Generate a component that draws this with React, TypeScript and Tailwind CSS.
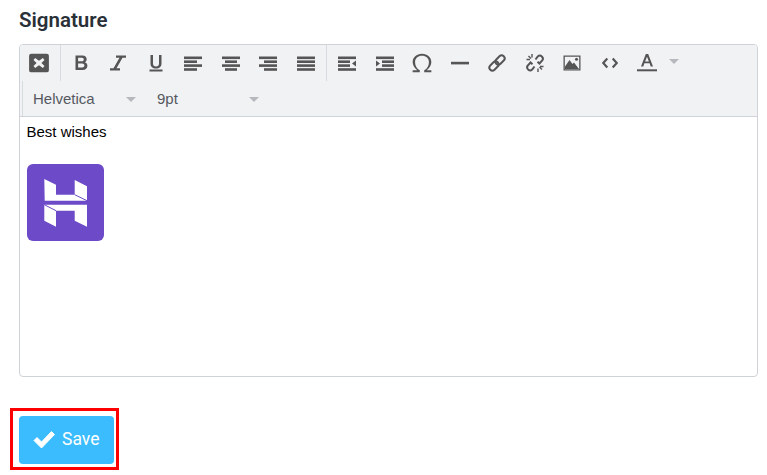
import React from "react";

const Ic = ({ children, w = 20, h = 20 }: { children: React.ReactNode; w?: number; h?: number }) => (
  <svg width={w} height={h} viewBox="0 0 20 20" fill="#555555">{children}</svg>
);

const Lines = ({ rows }: { rows: [number, number][] }) => (
  <Ic>
    {rows.map(([x, w], i) => (
      <rect key={i} x={x} y={3.5 + i * 3.9} width={w} height={2.6} />
    ))}
  </Ic>
);

const Btn = ({ children }: { children: React.ReactNode }) => (
  <div className="w-[37.5px] h-[36px] flex items-center justify-center">{children}</div>
);

const Sep = () => <div className="w-px h-full bg-[#d7dbe0] mx-[1.5px]" />;

const Caret = () => (
  <span className="w-0 h-0 border-x-[5px] border-x-transparent border-t-[5px] border-t-[#b5b9be]" />
);

export default function App() {
  return (
    <div className="w-[767px] h-[475px] bg-white overflow-hidden font-['Roboto',sans-serif]">
      <h2 className="pl-[19px] pt-[8px] h-[44px] text-[20.5px] leading-[24px] font-semibold text-[#2a3038]">Signature</h2>
      <div className="ml-[19px] w-[739px] h-[333px] border border-[#cfd3d8] rounded-[4px] overflow-hidden">
        <div className="h-[72px] bg-[#f1f2f4] border-b border-[#cfd3d8]">
          <div className="h-[36px] flex pl-[0.5px]">
            <Btn>
              <Ic w={22} h={22}>
                <path fillRule="evenodd" d="M3 1.500h14a2 2 0 0 1 2 2v13a2 2 0 0 1-2 2H3a2 2 0 0 1-2-2v-13a2 2 0 0 1 2-2Zm3.500 4L5 7.200 7.800 10 5 12.800l1.500 1.700L10 12l3.500 2.500 1.500-1.700L12.200 10 15 7.200l-1.500-1.700L10 8z" />
              </Ic>
            </Btn>
            <Sep />
            <Btn>
              <Ic>
                <path fillRule="evenodd" d="M4.500 2.500h6.900c2.700 0 4.300 1.500 4.300 3.700 0 1.400-.7 2.500-1.800 3 1.500.5 2.500 1.800 2.500 3.500 0 2.500-1.800 4.300-4.700 4.300H4.500Zm2.600 2.300v3.500h3.700c1.200 0 2-.7 2-1.800 0-1-.8-1.700-2-1.700Zm0 5.800v4h4c1.400 0 2.300-.8 2.300-2s-.9-2-2.300-2Z" />
              </Ic>
            </Btn>
            <Btn>
              <Ic>
                <path d="M8 2.500h10v2.200h-3.500L8.500 15.300H12v2.200H2v-2.200h3.500L11.500 4.700H8Z" />
              </Ic>
            </Btn>
            <Btn>
              <Ic>
                <path d="M4.500 2h2.500v8.500c0 2 1.100 3 3 3s3-1 3-3V2h2.500v8.500c0 3.300-2.100 5-5.500 5s-5.500-1.700-5.500-5Z" />
                <rect x="3.500" y="16.500" width="13" height="2" />
              </Ic>
            </Btn>
            <Btn><Lines rows={[[1, 18], [1, 13], [1, 18], [1, 13]]} /></Btn>
            <Btn><Lines rows={[[1, 18], [4, 12], [1, 18], [4, 12]]} /></Btn>
            <Btn><Lines rows={[[1, 18], [6, 13], [1, 18], [6, 13]]} /></Btn>
            <Btn><Lines rows={[[1, 18], [1, 18], [1, 18], [1, 18]]} /></Btn>
            <Sep />
            <Btn>
              <Ic>
                <rect x="1" y="3.500" width="18" height="2.600" />
                <rect x="1" y="7.400" width="12" height="2.600" />
                <rect x="1" y="11.300" width="12" height="2.600" />
                <rect x="1" y="15.200" width="18" height="2.600" />
                <path d="M19 7.500v6l-4-3Z" />
              </Ic>
            </Btn>
            <Btn>
              <Ic>
                <rect x="1" y="3.500" width="18" height="2.600" />
                <rect x="7" y="7.400" width="12" height="2.600" />
                <rect x="7" y="11.300" width="12" height="2.600" />
                <rect x="1" y="15.200" width="18" height="2.600" />
                <path d="M1 7.500v6l4-3Z" />
              </Ic>
            </Btn>
            <Btn>
              <Ic w={22} h={22}>
                <path d="M1.500 18.500v-2h4.200C3.200 14.800 1.500 12 1.500 9.200 1.500 4.800 5 1.500 10 1.500s8.500 3.300 8.500 7.700c0 2.800-1.700 5.600-4.200 7.300h4.200v2H12v-1.900c2.700-1.300 4.300-4.300 4.300-7.300C16.300 5.900 13.700 3.500 10 3.500S3.700 5.900 3.700 9.300c0 3 1.600 6 4.300 7.300v1.900Z" />
              </Ic>
            </Btn>
            <Btn>
              <Ic><rect x="1" y="8.800" width="18" height="2.600" /></Ic>
            </Btn>
            <Btn>
              <Ic>
                <g fill="none" stroke="#555555" strokeWidth="2" transform="rotate(-45 10 10)">
                  <rect x="0.500" y="7" width="10.500" height="6" rx="3" />
                  <rect x="9" y="7" width="10.500" height="6" rx="3" />
                </g>
              </Ic>
            </Btn>
            <Btn>
              <Ic>
                <g fill="none" stroke="#555555" strokeWidth="2">
                  <path d="M10.500 6.500l2.300-3a2.900 2.900 0 0 1 4 0l.2.200a2.900 2.900 0 0 1 0 4l-2.500 2.800-2-1.800" />
                  <path d="M9.500 13.500l-2.300 3a2.900 2.900 0 0 1-4 0l-.2-.2a2.900 2.900 0 0 1 0-4l2.500-2.800 2 1.800" />
                  <path d="M1.500 6.500h3.500M7 1v3.500M3.500 3l2.500 2.500M14.500 14l2.500 2.500M18.500 13.500H15M13 19v-3.500" strokeWidth="1.400" />
                </g>
              </Ic>
            </Btn>
            <Btn>
              <Ic>
                <path fillRule="evenodd" d="M1.500 2.500h17v15h-17Zm1.300 1.300v12.400h14.400V3.800Z" />
                <path d="M3 16v-2.500l4.500-6.500 3 4 1.500-1.500 5 6.500Z" />
                <circle cx="14.500" cy="6.300" r="1.500" />
              </Ic>
            </Btn>
            <Btn>
              <Ic w={18} h={18}>
                <path d="M7 5 2.500 10 7 15" fill="none" stroke="#555555" strokeWidth="2.400" />
                <path d="M13 5l4.500 5-4.500 5" fill="none" stroke="#555555" strokeWidth="2.400" />
              </Ic>
            </Btn>
            <Btn>
              <Ic w={20} h={22}>
                <path fillRule="evenodd" d="M8.800 1h2.400l4.800 12.500h-2.300l-1.100-3.200H7.400l-1.100 3.200H4Zm1.200 2.800L8.100 8.500h3.800Z" />
                <rect x="0" y="16.300" width="20" height="2" />
              </Ic>
            </Btn>
            <div className="h-[32px] ml-[3px] flex items-center"><Caret /></div>
          </div>
          <div className="h-[35px] pt-[1px] ml-[2px] border-l border-[#d7dbe0] flex items-center text-[15px] text-[#55595f] font-['Liberation_Sans',sans-serif]">
            <span className="w-[103px] pl-[10px]">Helvetica</span>
            <Caret />
            <span className="ml-[21px] w-[92px]">9pt</span>
            <Caret />
          </div>
        </div>
        <div className="px-[6.5px] pt-[6px] text-[15px] leading-[18px] text-black font-['Liberation_Sans',sans-serif]">
          <p>Best wishes</p>
          <svg className="mt-[23px]" width="77" height="77" viewBox="0 0 77 77">
            <rect width="77" height="77" rx="6" fill="#6d4ac8" />
            <path fill="#fff" d="M17.300 15 29 20.700V30.700H47.700V16L60 22.300V36.700H17.700Z" />
            <path fill="#fff" d="M17.300 40.700H60V62.700L47.700 56.700V46.700H29V62.700L17.300 56.700Z" />
            <path stroke="#6d4ac8" strokeWidth="1" d="M17.300 40.700 29 46.700M47.700 30.700 60 36.700" />
          </svg>
        </div>
      </div>
      <div className="mt-[31px] ml-[10px] w-[109px] h-[62px] border-[3px] border-[#ff0000] pl-[6px] pt-[5px]">
        <button className="w-[95px] h-[48px] pb-[2px] rounded-[4px] bg-[#3bbcff] text-white flex items-center pl-[13px] gap-[6px] text-[17.5px] font-normal">
          <svg width="24" height="20" viewBox="0 0 24 20" fill="#ffffff">
            <path d="M2 11.500 5 8.500 9.500 13 19.500 2.500 22.500 5.500 9.500 19Z" stroke="#ffffff" strokeLinejoin="round" strokeWidth="1" />
          </svg>
          Save
        </button>
      </div>
    </div>
  );
}
